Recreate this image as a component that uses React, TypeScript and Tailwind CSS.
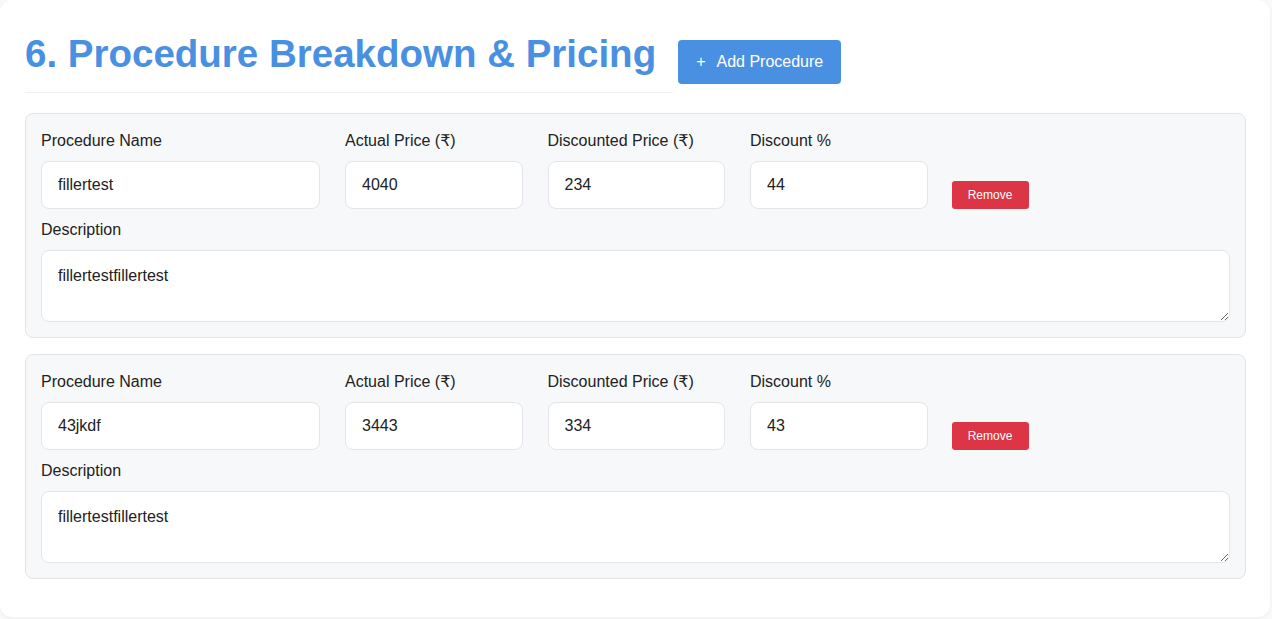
import { useState } from 'react';

type Procedure = {
  name: string;
  actual: string;
  discounted: string;
  discount: string;
  description: string;
};

const initial: Procedure[] = [
  { name: 'fillertest', actual: '4040', discounted: '234', discount: '44', description: 'fillertestfillertest' },
  { name: '43jkdf', actual: '3443', discounted: '334', discount: '43', description: 'fillertestfillertest' },
];

const inputCls =
  'h-[48px] w-full rounded-lg border border-[#e3e5e8] bg-white px-4 text-[16px] text-[#222] outline-none';

function Field({ label, value, width }: { label: string; value: string; width: string }) {
  return (
    <div className={`flex flex-col ${width}`}>
      <label className="mb-[9px] text-[16px] leading-[22px] text-[#222]">{label}</label>
      <input className={inputCls} defaultValue={value} />
    </div>
  );
}

export default function App() {
  const [items, setItems] = useState(initial);

  return (
    <main
      className="min-h-screen bg-[#fafafa] p-0"
      style={{ fontFamily: '"Liberation Sans", Arial, "DejaVu Sans", sans-serif' }}
    >
      <div className="h-[617px] w-[1270px] rounded-xl bg-white pl-[25px] pr-[24px] pt-[30px] shadow-[0_1px_4px_rgba(0,0,0,0.06)]">
        {/* HEADER */}
        <div className="mb-[20px] flex items-start gap-[5px]">
          <h2 className="border-b border-[#f0f1f3] pb-[14px] pr-[17px] text-[38.5px] font-bold leading-[48px] text-[#4a90e2]">
            6. Procedure Breakdown &amp; Pricing
          </h2>
          <button className="mt-[10px] flex h-[44px] items-center gap-[11px] rounded-[4px] bg-[#4a90e2] px-[18px] text-[16px] text-white">
            <span className="text-[16px]">+</span>
            Add Procedure
          </button>
        </div>

        {/* PROCEDURES */}
        <div className="flex flex-col gap-[16px]">
          {items.map((p, i) => (
            <div key={i} className="rounded-lg border border-[#e2e4e8] bg-[#f7f8fa] px-[15px] pb-[15px] pt-[16px]">
              <div className="flex items-end gap-[25px]">
                <Field label="Procedure Name" value={p.name} width="w-[279px]" />
                <Field label="Actual Price (₹)" value={p.actual} width="w-[177.5px]" />
                <Field label="Discounted Price (₹)" value={p.discounted} width="w-[177.5px]" />
                <Field label="Discount %" value={p.discount} width="w-[177.5px]" />
                <button
                  onClick={() => setItems(items.filter((_, j) => j !== i))}
                  className="h-[28px] w-[77px] -translate-x-px rounded-[3px] bg-[#dc3545] text-[12px] text-white"
                >
                  Remove
                </button>
              </div>
              <label className="mb-[9px] mt-[10px] block text-[16px] leading-[22px] text-[#222]">Description</label>
              <textarea
                className="block h-[72px] w-full rounded-lg border border-[#e3e5e8] bg-white px-4 py-[13px] text-[16px] text-[#222] outline-none"
                defaultValue={p.description}
              />
            </div>
          ))}
        </div>
      </div>
    </main>
  );
}
